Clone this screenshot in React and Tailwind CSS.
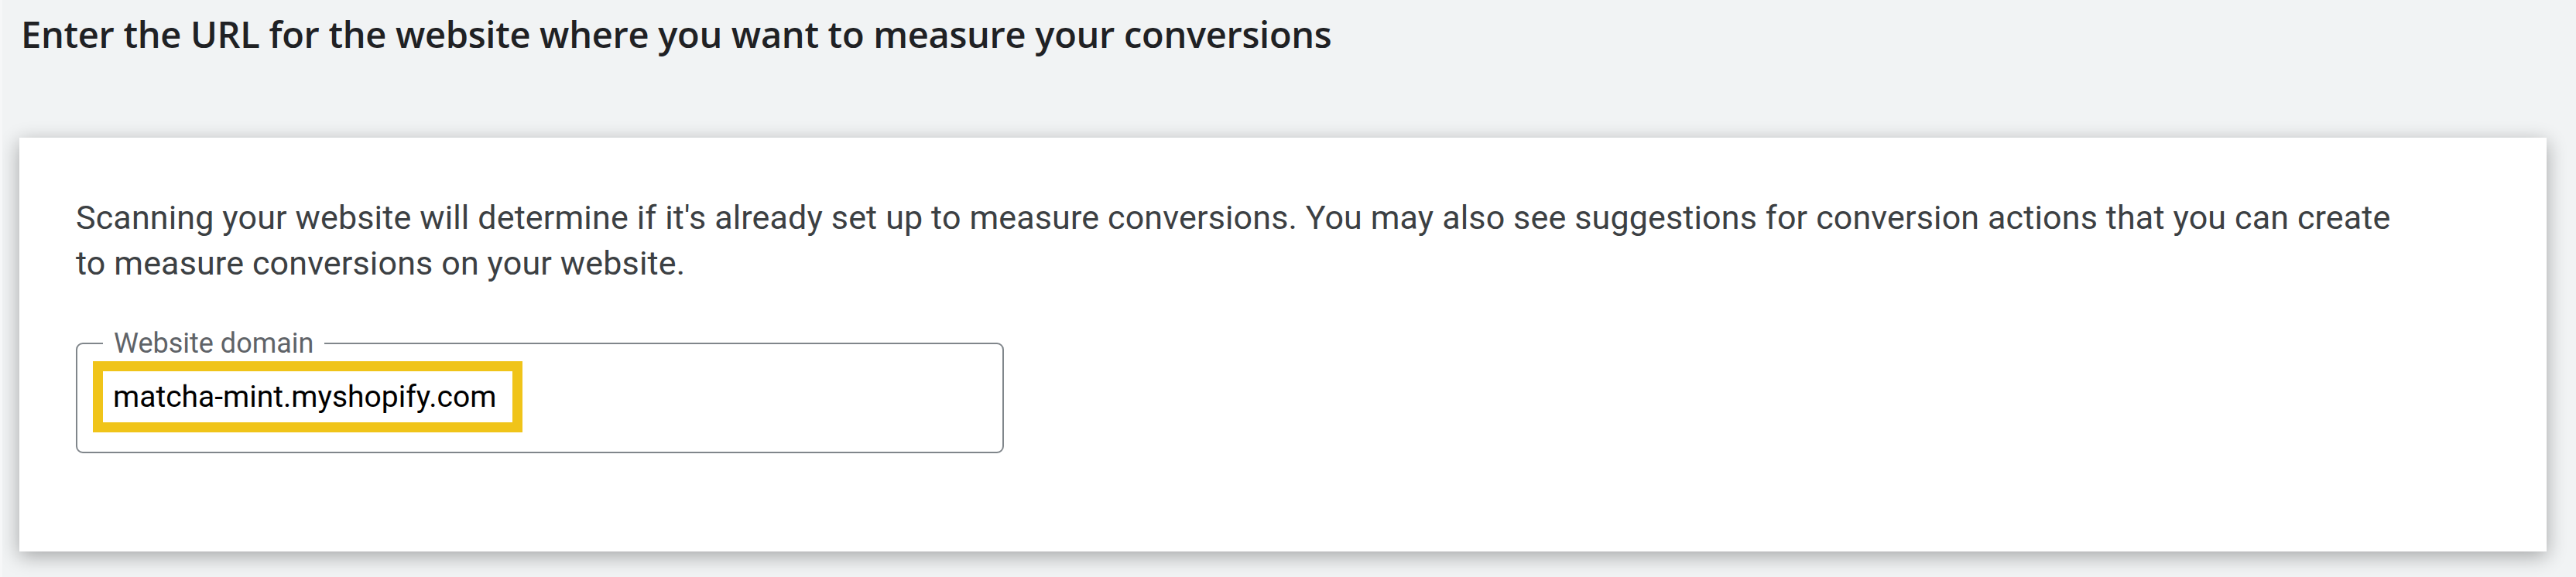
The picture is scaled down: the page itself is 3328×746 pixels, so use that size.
import React from 'react';

const App = () => {
  return (
    <div className="w-full h-[746px] bg-[#f1f3f4] overflow-hidden pl-[22px] pr-[25px] border-l-[3px] border-[#f6f7f8]">
      <h1 className="pl-[2px] pt-[16px] text-[47px] leading-[56px] font-semibold text-[#202124] font-['Open_Sans',sans-serif] tracking-[-0.3px] whitespace-nowrap">
        Enter the URL for the website where you want to measure your conversions
      </h1>

      <div className="mt-[106px] w-[3265px] h-[535px] bg-white shadow-[0_6px_24px_rgba(0,0,0,0.32)] pl-[73px] pt-[74px] font-['Roboto',sans-serif]">
        <p className="w-[3020px] text-[43px] leading-[59px] text-[#3c4043] tracking-[0.15px]">
          Scanning your website will determine if it's already set up to measure conversions. You may also see suggestions for conversion actions that you can create to measure conversions on your website.
        </p>

        <fieldset className="mt-[54px] w-[1199px] h-[162px] border-2 border-[#80868b] rounded-[9px] px-[20px] pb-0 pt-0">
          <legend className="ml-[13px] px-[14px] text-[36px] leading-[40px] text-[#5f6368]">
            Website domain
          </legend>
          <div className="mt-[3px] w-[555px] h-[92px] border-[13px] border-[#f0c419] bg-white pl-[13px] flex items-center">
            <span className="text-[39px] leading-[50px] text-[#000000] whitespace-nowrap">matcha-mint.myshopify.com</span>
          </div>
        </fieldset>
      </div>
    </div>
  );
};

export default App;
